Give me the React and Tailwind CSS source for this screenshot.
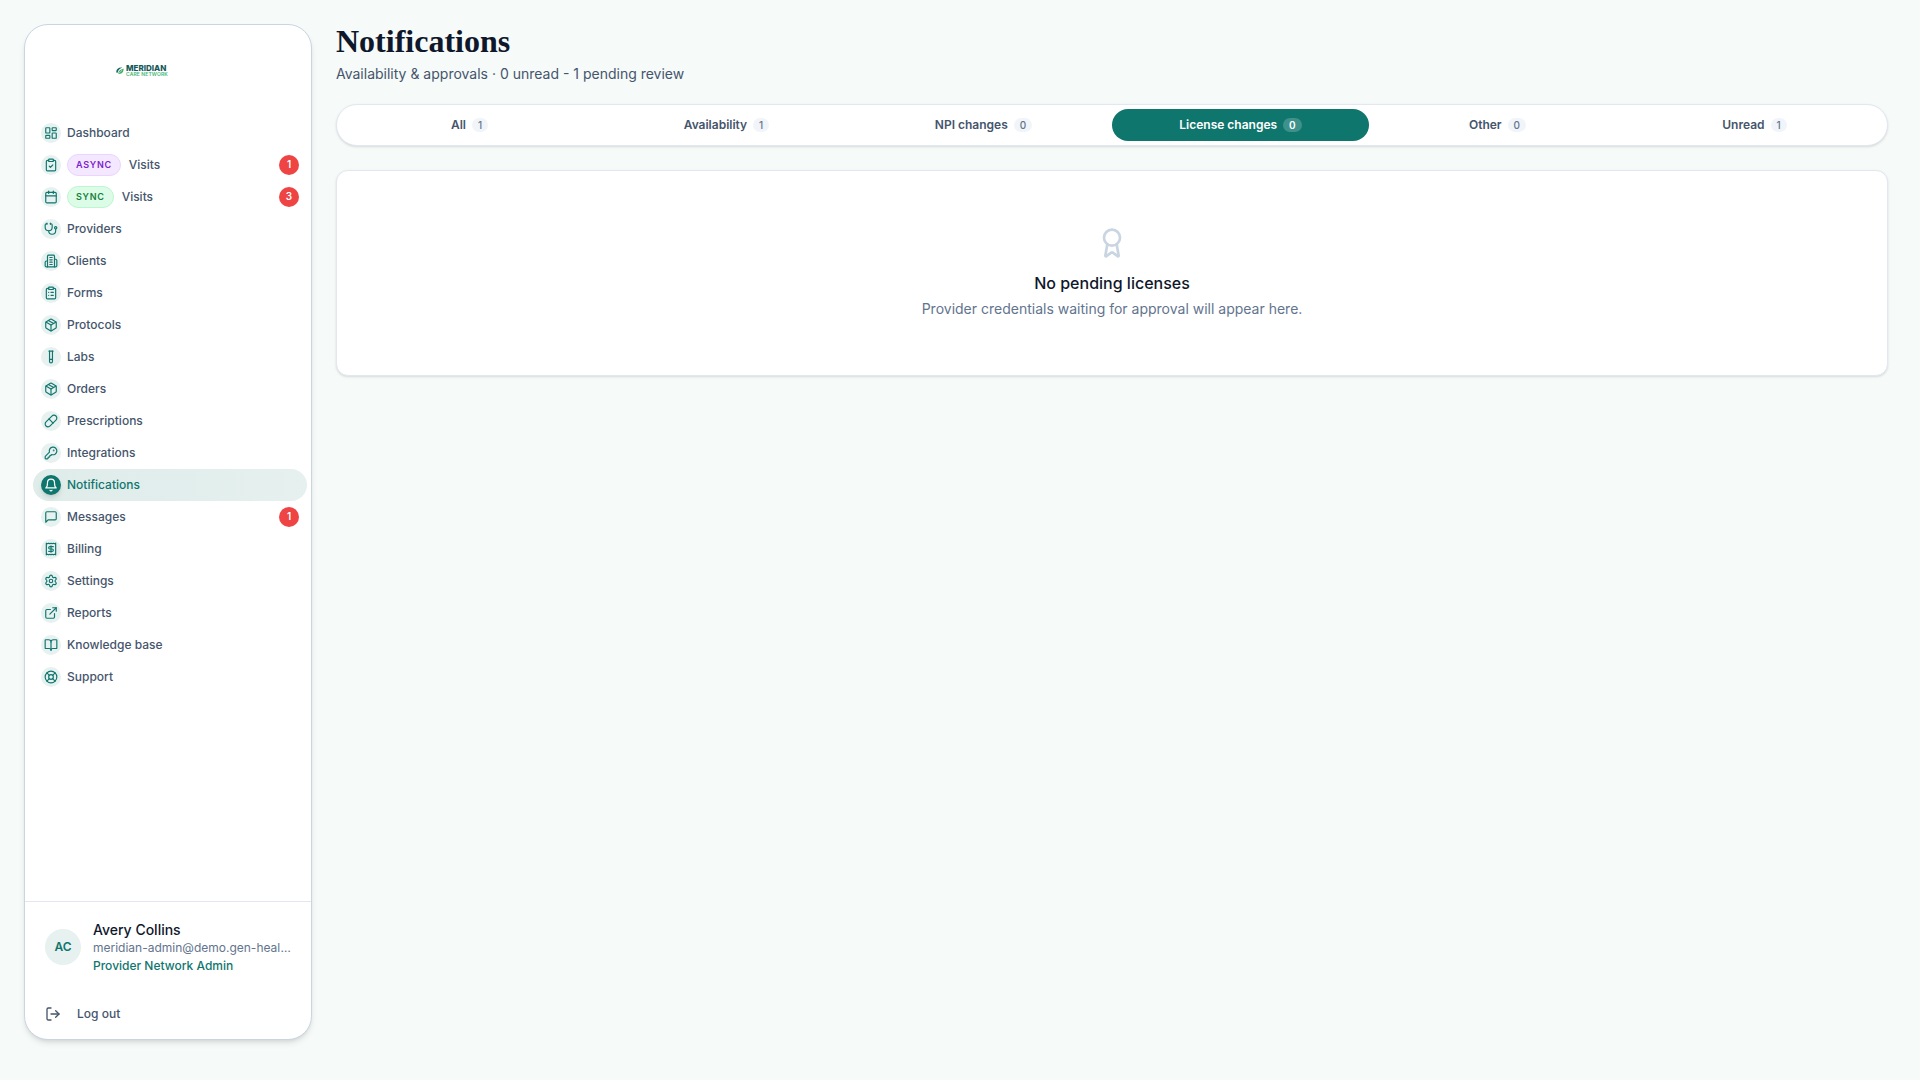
import React, { useState } from "react";
import {
  LayoutDashboard, ClipboardCheck, Calendar, Stethoscope, ClipboardList,
  Package, TestTube, Pill, KeyRound, Receipt, Settings,
  ExternalLink, BookOpen, LifeBuoy, LogOut, Award,
} from "lucide-react";

function LineIcon({ className, children }) {
  return (
    <svg
      viewBox="0 0 24 24"
      className={className}
      fill="none"
      stroke="currentColor"
      strokeWidth="2"
      strokeLinecap="round"
      strokeLinejoin="round"
      aria-hidden="true"
    >
      {children}
    </svg>
  );
}

function BuildingIcon({ className }) {
  return (
    <LineIcon className={className}>
      <path d="M6 22V4a2 2 0 0 1 2-2h8a2 2 0 0 1 2 2v18Z" />
      <path d="M6 12H4a2 2 0 0 0-2 2v6a2 2 0 0 0 2 2h2" />
      <path d="M18 9h2a2 2 0 0 1 2 2v9a2 2 0 0 1-2 2h-2" />
      <path d="M10 6h4" />
      <path d="M10 10h4" />
      <path d="M10 14h4" />
      <path d="M10 18h4" />
    </LineIcon>
  );
}

function BellIcon({ className }) {
  return (
    <LineIcon className={className}>
      <path d="M6 8a6 6 0 0 1 12 0c0 7 3 9 3 9H3s3-2 3-9" />
      <path d="M10.3 21a1.94 1.94 0 0 0 3.4 0" />
    </LineIcon>
  );
}

function MessageIcon({ className }) {
  return (
    <LineIcon className={className}>
      <path d="M21 15a2 2 0 0 1-2 2H7l-4 4V5a2 2 0 0 1 2-2h14a2 2 0 0 1 2 2z" />
    </LineIcon>
  );
}

const NAV = [
  { label: "Dashboard", icon: LayoutDashboard },
  { label: "Visits", icon: ClipboardCheck, pill: "ASYNC", pillStyle: "border-[#e9d5ff] bg-[#f3e8ff] text-[#7e22ce]", count: 1 },
  { label: "Visits", icon: Calendar, pill: "SYNC", pillStyle: "border-[#bbf7d0] bg-[#dcfce7] text-[#15803d]", count: 3 },
  { label: "Providers", icon: Stethoscope },
  { label: "Clients", icon: BuildingIcon },
  { label: "Forms", icon: ClipboardList },
  { label: "Protocols", icon: Package },
  { label: "Labs", icon: TestTube },
  { label: "Orders", icon: Package },
  { label: "Prescriptions", icon: Pill },
  { label: "Integrations", icon: KeyRound },
  { label: "Notifications", icon: BellIcon, active: true },
  { label: "Messages", icon: MessageIcon, count: 1 },
  { label: "Billing", icon: Receipt },
  { label: "Settings", icon: Settings },
  { label: "Reports", icon: ExternalLink },
  { label: "Knowledge base", icon: BookOpen },
  { label: "Support", icon: LifeBuoy },
];

const TABS = [
  { label: "All", count: 1 },
  { label: "Availability", count: 1 },
  { label: "NPI changes", count: 0 },
  { label: "License changes", count: 0 },
  { label: "Other", count: 0 },
  { label: "Unread", count: 1 },
];

function Logo() {
  return (
    <a href="#home" className="flex items-center gap-0.5" aria-label="Meridian Care Network">
      <svg viewBox="1 1 15 15" className="size-2" fill="none" strokeLinecap="round">
        <path d="M2 12C0 6 5 1 13 2C9 4 5 6 4 12Z" fill="#14665f" />
        <path d="M5 14C5 9 9 6 15 4C16 10 12 15 5 14Z" fill="#3fae6b" />
        <path d="M5 13C8 12 10 10 12 7" stroke="#ffffff" strokeWidth="1" />
      </svg>
      <span className="flex flex-col">
        <span className="text-[8px] leading-[7px] font-extrabold text-[#14595a]">MERIDIAN</span>
        <span className="text-[5px] leading-[5px] font-semibold tracking-wide text-[#3fb673]">CARE NETWORK</span>
      </span>
    </a>
  );
}

function NavItem({ item }) {
  const Icon = item.icon;
  return (
    <a
      href={"#" + item.label.toLowerCase()}
      aria-current={item.active ? "page" : undefined}
      className={
        "flex h-8 items-center gap-1.5 rounded-2xl px-2 text-xs font-medium " +
        (item.active ? "bg-linear-to-r from-[#dfecea] to-[#e5f0ef] text-[#0f766e]" : "text-slate-600")
      }
    >
      <span
        className={
          "flex size-5 shrink-0 items-center justify-center rounded-full " +
          (item.active ? "bg-[#0f766e] text-white shadow-md" : "bg-[#e7f1f0] text-[#0f766e]")
        }
      >
        <Icon className="size-3.5" />
      </span>
      {item.pill ? (
        <span className="flex items-center gap-2">
          <span className={"rounded-full border px-2 text-[9px] leading-5 font-semibold tracking-[0.08em] " + item.pillStyle}>
            {item.pill}
          </span>
          {item.label}
        </span>
      ) : (
        <span>{item.label}</span>
      )}
      {item.count && (
        <span className="ml-auto flex size-5 items-center justify-center rounded-full bg-[#ef4444] text-[10px] font-semibold text-white">
          {item.count}
        </span>
      )}
    </a>
  );
}

function Sidebar() {
  return (
    <aside className="sticky top-6 flex h-[calc(100vh-64px)] w-72 shrink-0 flex-col overflow-hidden rounded-3xl border border-slate-300 bg-white shadow-md">
      <div className="flex h-[92px] shrink-0 items-center pr-4 pl-[91px]">
        <Logo />
      </div>
      <nav className="flex-1 overflow-y-auto pr-1 pl-2" aria-label="Main">
        {NAV.map((item, i) => (
          <NavItem key={i} item={item} />
        ))}
      </nav>
      <div className="border-t border-slate-200 px-5 pt-[18px] pb-[9px]">
        <div className="flex items-center gap-3">
          <span className="flex size-9 shrink-0 items-center justify-center rounded-full bg-[#e7f1f0] text-xs font-semibold text-[#0f766e]">
            AC
          </span>
          <div className="min-w-0 flex-1">
            <p className="truncate text-sm font-medium text-slate-900">Avery Collins</p>
            <p className="truncate text-xs text-slate-500">meridian-admin@demo.gen-health.example</p>
            <p className="mt-0.5 truncate text-xs font-medium text-[#0f766e]">Provider Network Admin</p>
          </div>
        </div>
        <button type="button" className="mt-6 flex h-8 w-full items-center gap-4 text-xs font-medium text-slate-600">
          <LogOut className="size-4" />
          Log out
        </button>
      </div>
    </aside>
  );
}

function Tab({ tab, active, onSelect }) {
  return (
    <button
      type="button"
      role="tab"
      aria-selected={active}
      onClick={onSelect}
      className={
        "flex h-8 items-center justify-center gap-1.5 rounded-full text-xs font-semibold " +
        (active ? "bg-[#0f766e] text-white" : "text-slate-600")
      }
    >
      {tab.label}
      <span
        className={
          "rounded-full px-1.5 text-[10px] leading-3.5 " +
          (active ? "bg-white/20 font-semibold text-white" : "bg-slate-100 font-medium text-slate-500")
        }
      >
        {tab.count}
      </span>
    </button>
  );
}

export default function App() {
  const [selected, setSelected] = useState("License changes");
  return (
    <div className="flex min-h-screen items-start gap-6 bg-[#f6faf9] py-6 pr-8 pl-6 font-['Inter',sans-serif]">
      <Sidebar />
      <main className="min-w-0 flex-1">
        <h1 className="font-['Liberation_Serif',serif] text-[32px] leading-[34px] font-bold text-slate-900">Notifications</h1>
        <p className="mt-1.5 text-sm text-slate-600">Availability &amp; approvals · 0 unread - 1 pending review</p>
        <div role="tablist" className="mt-5 grid grid-cols-6 rounded-full border border-slate-200 bg-white p-1 shadow-sm">
          {TABS.map((tab) => (
            <Tab key={tab.label} tab={tab} active={tab.label === selected} onSelect={() => setSelected(tab.label)} />
          ))}
        </div>
        <section className="mt-6 flex flex-col items-center rounded-xl border border-slate-200 bg-white px-6 py-14 text-center shadow-sm">
          <Award className="size-8 text-slate-300" />
          <h2 className="mt-3 text-base font-medium text-slate-900">No pending licenses</h2>
          <p className="mt-1 text-sm text-slate-500">Provider credentials waiting for approval will appear here.</p>
        </section>
      </main>
    </div>
  );
}
